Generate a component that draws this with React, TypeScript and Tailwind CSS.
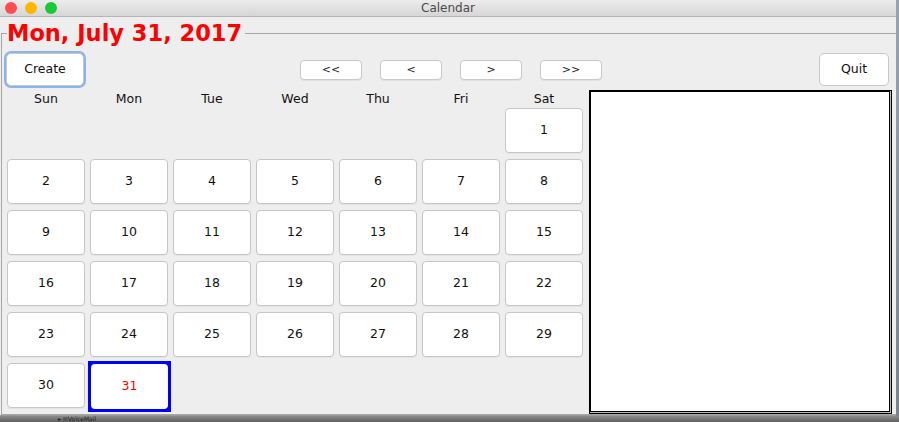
const DAYS = ['Sun', 'Mon', 'Tue', 'Wed', 'Thu', 'Fri', 'Sat'];
const FIRST_OFFSET = 6; // July 1, 2017 is a Saturday
const DAYS_IN_MONTH = 31;
const SELECTED = 31;

const ui = { fontFamily: '"DejaVu Sans", "Noto Sans", sans-serif' };

function NavButton({ label }: { label: string }) {
  return (
    <button className="w-[62px] h-[20px] bg-white border border-[#c8c8c8] rounded-[4px] text-[11px] text-[#222] leading-none flex items-center justify-center shadow-[0_1px_0_rgba(0,0,0,0.05)]">
      {label}
    </button>
  );
}

function DayCell({ day }: { day: number }) {
  if (day === SELECTED) {
    return (
      <div className="relative h-[45px]">
        <div className="absolute left-[-2px] top-[-2px] w-[83px] h-[51px] bg-[#0000ff] p-[3px]">
          <div className="w-full h-full bg-white rounded-[4px] flex items-center justify-center text-[12.5px] text-[#ff0000]">
            {day}
          </div>
        </div>
      </div>
    );
  }
  return (
    <div className="h-[45px] bg-white border border-[#c6c6c6] rounded-[4px] flex items-center justify-center text-[12.5px] text-[#111] shadow-[0_1px_0_rgba(0,0,0,0.04)]">
      {day}
    </div>
  );
}

export default function App() {
  const cells: (number | null)[] = [];
  for (let i = 0; i < FIRST_OFFSET; i++) cells.push(null);
  for (let d = 1; d <= DAYS_IN_MONTH; d++) cells.push(d);

  return (
    <div className="w-[899px] h-[422px] overflow-hidden flex flex-col bg-[#6b6b6b]" style={ui}>
      <div className="flex">
        {/* Window */}
        <div className="w-[896px] h-[416px] flex flex-col bg-[#eeeeee] border-b border-[#9a9a9a]">
          {/* Title bar */}
          <div className="relative h-[17px] shrink-0 bg-gradient-to-b from-[#ececec] to-[#d6d6d6] border-b border-[#b4b4b4] flex items-center justify-center">
            <div className="absolute left-[5px] top-[2px] flex gap-[8px]">
              <span className="w-[12px] h-[12px] rounded-full bg-[#fd4e53]" />
              <span className="w-[12px] h-[12px] rounded-full bg-[#fdb700]" />
              <span className="w-[12px] h-[12px] rounded-full bg-[#1ac83b]" />
            </div>
            <span className="text-[12px] text-[#4a4a4a] leading-none">Calendar</span>
          </div>

          {/* Body */}
          <div className="flex-1 pl-[1px] pt-[2px]">
            <fieldset className="w-[893px] h-[396px] border border-[#a6a6a6] pl-[4px] pr-[4px]">
              <legend
                className="ml-[1px] pr-[3px] text-[22.5px] font-bold text-[#ff0000] leading-[28px]"
                style={{ fontFamily: '"DejaVu Sans", sans-serif' }}
              >
                Mon, July 31, 2017
              </legend>

              {/* Toolbar */}
              <div className="mt-[6px] h-[33px] flex items-center">
                <button className="w-[78px] h-[33px] bg-white border border-[#c8c8c8] rounded-[5px] text-[12.5px] text-[#111] shadow-[0_0_0_2px_#8bb4ee]">
                  Create
                </button>
                <div className="ml-[216px] flex gap-[18px]">
                  <NavButton label="<<" />
                  <NavButton label="<" />
                  <NavButton label=">" />
                  <NavButton label=">>" />
                </div>
                <button className="ml-auto mr-[3px] w-[70px] h-[33px] bg-white border border-[#c8c8c8] rounded-[5px] text-[12.5px] text-[#111]">
                  Quit
                </button>
              </div>

              {/* Main */}
              <div className="mt-[4px] flex">
                <div className="pl-[1px] w-[577px]">
                  <div className="grid grid-cols-7 gap-x-[5px] h-[18px] items-center">
                    {DAYS.map((d) => (
                      <div key={d} className="text-center text-[12.5px] text-[#111] leading-none">
                        {d}
                      </div>
                    ))}
                  </div>
                  <div className="grid grid-cols-7 gap-x-[5px] gap-y-[6px]">
                    {cells.map((c, i) => (c === null ? <div key={`e${i}`} className="h-[45px]" /> : <DayCell key={c} day={c} />))}
                  </div>
                </div>

                {/* Event panel */}
                <div className="ml-[6px] w-[303px] h-[324px] border border-black bg-[#bdbdbd] pr-px pb-px">
                  <div className="w-full h-full bg-white border border-black" />
                </div>
              </div>
            </fieldset>
          </div>
        </div>
        <div className="flex-1 bg-gradient-to-b from-[#9aa4b0] to-[#7a828c]" />
      </div>

      {/* Desktop peeking below */}
      <div className="flex-1 bg-gradient-to-b from-[#8c8c8c] to-[#5e5e5e] pl-[58px] text-[6px] text-[#222] leading-[6px]">
        ▸ ✉VoiceMail
      </div>
    </div>
  );
}
